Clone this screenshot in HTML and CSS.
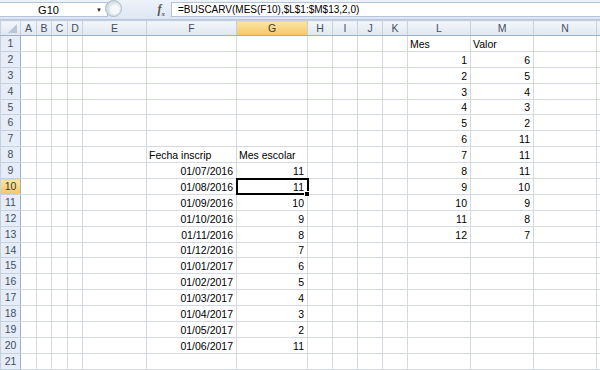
FILE: index.html
```html
<!doctype html>
<html lang="es">
  <head>
    <meta charset="UTF-8" />
    <title>Libro1 - BUSCARV</title>
    <link rel="stylesheet" href="styles.css">
  </head>
  <body>
    <div class="formula-bar">
      <div class="name-box">
        <span class="cell-ref">G10</span>
        <span class="drop">&#9660;</span>
      </div>
      <div class="grip"></div>
      <div class="fx-zone"><span class="fx">f<sub>x</sub></span></div>
      <div class="formula">=BUSCARV(MES(F10),$L$1:$M$13,2,0)</div>
    </div>

    <table class="sheet">
      <colgroup>
        <col class="c-hdr">
        <col class="c-a"><col class="c-b"><col class="c-c"><col class="c-d">
        <col class="c-e"><col class="c-f"><col class="c-g">
        <col class="c-h"><col class="c-i"><col class="c-j"><col class="c-k">
        <col class="c-l"><col class="c-m"><col class="c-n"><col class="c-o">
      </colgroup>
      <thead>
        <tr>
          <th class="corner"><span class="tri"></span></th>
          <th>A</th><th>B</th><th>C</th><th>D</th><th>E</th><th>F</th>
          <th class="active">G</th>
          <th>H</th><th>I</th><th>J</th><th>K</th><th>L</th><th>M</th><th>N</th><th></th>
        </tr>
      </thead>
      <tbody>
        <tr><th>1</th><td></td><td></td><td></td><td></td><td></td><td></td><td></td><td></td><td></td><td></td><td></td><td>Mes</td><td>Valor</td><td></td><td></td></tr>
        <tr><th>2</th><td></td><td></td><td></td><td></td><td></td><td></td><td></td><td></td><td></td><td></td><td></td><td class="n">1</td><td class="n">6</td><td></td><td></td></tr>
        <tr><th>3</th><td></td><td></td><td></td><td></td><td></td><td></td><td></td><td></td><td></td><td></td><td></td><td class="n">2</td><td class="n">5</td><td></td><td></td></tr>
        <tr><th>4</th><td></td><td></td><td></td><td></td><td></td><td></td><td></td><td></td><td></td><td></td><td></td><td class="n">3</td><td class="n">4</td><td></td><td></td></tr>
        <tr><th>5</th><td></td><td></td><td></td><td></td><td></td><td></td><td></td><td></td><td></td><td></td><td></td><td class="n">4</td><td class="n">3</td><td></td><td></td></tr>
        <tr><th>6</th><td></td><td></td><td></td><td></td><td></td><td></td><td></td><td></td><td></td><td></td><td></td><td class="n">5</td><td class="n">2</td><td></td><td></td></tr>
        <tr><th>7</th><td></td><td></td><td></td><td></td><td></td><td></td><td></td><td></td><td></td><td></td><td></td><td class="n">6</td><td class="n">11</td><td></td><td></td></tr>
        <tr><th>8</th><td></td><td></td><td></td><td></td><td></td><td>Fecha inscrip</td><td>Mes escolar</td><td></td><td></td><td></td><td></td><td class="n">7</td><td class="n">11</td><td></td><td></td></tr>
        <tr><th>9</th><td></td><td></td><td></td><td></td><td></td><td class="n">01/07/2016</td><td class="n">11</td><td></td><td></td><td></td><td></td><td class="n">8</td><td class="n">11</td><td></td><td></td></tr>
        <tr><th class="active">10</th><td></td><td></td><td></td><td></td><td></td><td class="n">01/08/2016</td><td class="n selected">11</td><td></td><td></td><td></td><td></td><td class="n">9</td><td class="n">10</td><td></td><td></td></tr>
        <tr><th>11</th><td></td><td></td><td></td><td></td><td></td><td class="n">01/09/2016</td><td class="n">10</td><td></td><td></td><td></td><td></td><td class="n">10</td><td class="n">9</td><td></td><td></td></tr>
        <tr><th>12</th><td></td><td></td><td></td><td></td><td></td><td class="n">01/10/2016</td><td class="n">9</td><td></td><td></td><td></td><td></td><td class="n">11</td><td class="n">8</td><td></td><td></td></tr>
        <tr><th>13</th><td></td><td></td><td></td><td></td><td></td><td class="n">01/11/2016</td><td class="n">8</td><td></td><td></td><td></td><td></td><td class="n">12</td><td class="n">7</td><td></td><td></td></tr>
        <tr><th>14</th><td></td><td></td><td></td><td></td><td></td><td class="n">01/12/2016</td><td class="n">7</td><td></td><td></td><td></td><td></td><td></td><td></td><td></td><td></td></tr>
        <tr><th>15</th><td></td><td></td><td></td><td></td><td></td><td class="n">01/01/2017</td><td class="n">6</td><td></td><td></td><td></td><td></td><td></td><td></td><td></td><td></td></tr>
        <tr><th>16</th><td></td><td></td><td></td><td></td><td></td><td class="n">01/02/2017</td><td class="n">5</td><td></td><td></td><td></td><td></td><td></td><td></td><td></td><td></td></tr>
        <tr><th>17</th><td></td><td></td><td></td><td></td><td></td><td class="n">01/03/2017</td><td class="n">4</td><td></td><td></td><td></td><td></td><td></td><td></td><td></td><td></td></tr>
        <tr><th>18</th><td></td><td></td><td></td><td></td><td></td><td class="n">01/04/2017</td><td class="n">3</td><td></td><td></td><td></td><td></td><td></td><td></td><td></td><td></td></tr>
        <tr><th>19</th><td></td><td></td><td></td><td></td><td></td><td class="n">01/05/2017</td><td class="n">2</td><td></td><td></td><td></td><td></td><td></td><td></td><td></td><td></td></tr>
        <tr><th>20</th><td></td><td></td><td></td><td></td><td></td><td class="n">01/06/2017</td><td class="n">11</td><td></td><td></td><td></td><td></td><td></td><td></td><td></td><td></td></tr>
        <tr><th>21</th><td></td><td></td><td></td><td></td><td></td><td></td><td></td><td></td><td></td><td></td><td></td><td></td><td></td><td></td><td></td></tr>
      </tbody>
    </table>
  </body>
</html>
```

FILE: styles.css
```css
html,
body {
  margin: 0;
  padding: 0;
  overflow: hidden;
  background: #ffffff;
}

body {
  font-family: 'Liberation Sans', Arial, sans-serif;
  font-size: 10.5px;
  color: #000;
  width: 600px;
  height: 370px;
}

/* formula bar */

.formula-bar {
  display: flex;
  height: 20px;
  padding-top: 2px;
  box-sizing: border-box;
  background: linear-gradient(#eef3fa, #dde6f2);
  border-bottom: 1px solid #b7c7dc;
}

.name-box {
  width: 108px;
  height: 15px;
  background: #fff;
  border: 1px solid #b4c4d8;
  border-left: none;
  display: flex;
  align-items: center;
  box-sizing: border-box;
}

.cell-ref {
  flex: 1;
  text-align: center;
  font-size: 11px;
  padding-left: 6px;
}

.drop {
  font-size: 6px;
  color: #222;
  width: 16px;
  text-align: center;
}

.grip {
  width: 17px;
  height: 17px;
  margin-top: -2px;
  margin-left: -3px;
  border-radius: 50%;
  background: radial-gradient(circle at 60% 55%, #f6f8fb 30%, #c9d3df 75%);
  border: 1px solid #aeb9c7;
  box-sizing: border-box;
}

.fx-zone {
  width: 50px;
  display: flex;
  justify-content: flex-end;
  padding-right: 6px;
  box-sizing: border-box;
  border-right: 1px solid #b4c4d8;
  height: 15px;
}

.fx {
  font-family: 'Liberation Serif', serif;
  font-style: italic;
  font-weight: bold;
  font-size: 12px;
  color: #555;
  line-height: 14px;
}

.fx sub {
  font-size: 7px;
}

.formula {
  flex: 1;
  height: 15px;
  background: #fff;
  border-top: 1px solid #b4c4d8;
  border-bottom: 1px solid #b4c4d8;
  box-sizing: border-box;
  padding-left: 6px;
  font-size: 10px;
  line-height: 13px;
}

/* sheet grid */

.sheet {
  border-collapse: collapse;
  table-layout: fixed;
  width: 600px;
}

.c-hdr { width: 20px; }
.c-a { width: 16px; }
.c-b { width: 15px; }
.c-c { width: 16px; }
.c-d { width: 15px; }
.c-e { width: 64px; }
.c-f { width: 90px; }
.c-g { width: 71px; }
.c-h, .c-i, .c-j, .c-k { width: 25px; }
.c-l, .c-m, .c-n { width: 63px; }
.c-o { width: 4px; }

.sheet td {
  border: 1px solid #d4d9e2;
  height: 14.9px;
  padding: 0 3px 0 2px;
  white-space: nowrap;
  overflow: visible;
  vertical-align: bottom;
  line-height: 13px;
}

.sheet td:last-child,
.sheet th:last-child {
  padding: 0;
  overflow: hidden;
}

.sheet td.n {
  text-align: right;
}

.sheet th {
  font-weight: normal;
  font-size: 10.5px;
  color: #3f4f66;
  text-align: center;
  padding: 0;
  line-height: 13px;
  background: linear-gradient(#f4f7fb, #e4ebf4);
  border: 1px solid #c5d1de;
}

.sheet thead th {
  height: 14px;
  border-bottom-color: #9db0c8;
  background: linear-gradient(#f3f6fa, #dfe7f1);
}

.sheet tbody th {
  border-right-color: #9db0c8;
  background: #e6edf6;
}

.sheet th.active {
  background: linear-gradient(#fbe5a6, #f5c766);
  color: #3a3a3a;
}

.corner {
  position: relative;
}

.tri {
  position: absolute;
  right: 3px;
  bottom: 2px;
  width: 0;
  height: 0;
  border-left: 9px solid transparent;
  border-bottom: 9px solid #b8c6d8;
}

.sheet td.selected {
  position: relative;
  outline: 2px solid #000;
  outline-offset: -1px;
}

.sheet td.selected::after {
  content: '';
  position: absolute;
  right: -3px;
  bottom: -3px;
  width: 4px;
  height: 4px;
  background: #000;
  border: 1px solid #fff;
}
```
